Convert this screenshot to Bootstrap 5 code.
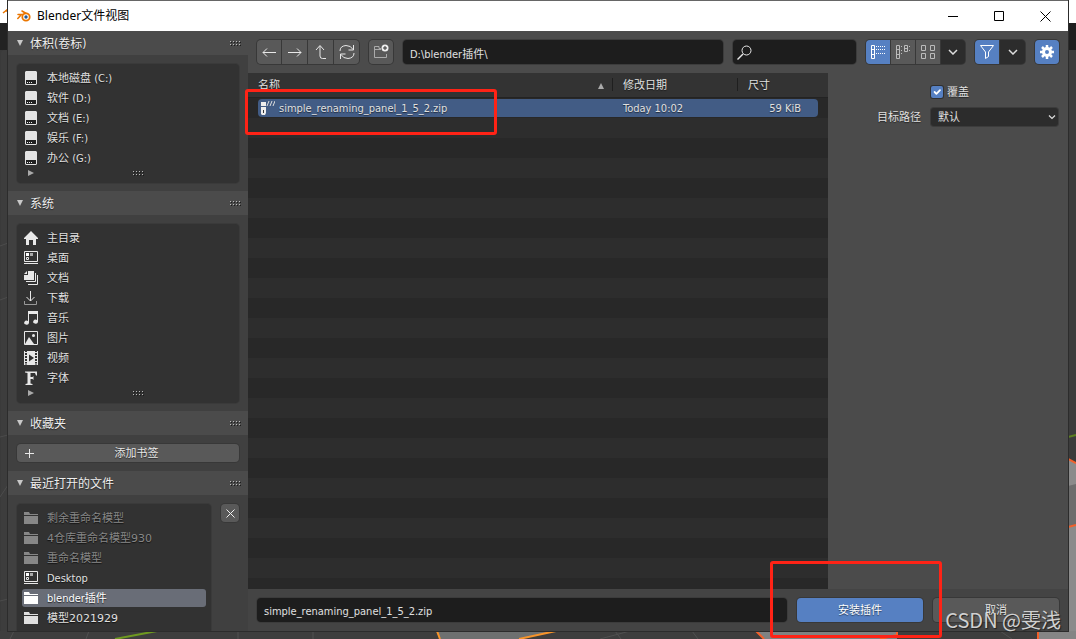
<!DOCTYPE html>
<html lang="zh-CN">
<head>
<meta charset="utf-8">
<meta name="viewport" content="width=device-width, initial-scale=1">
<title>Blender文件视图</title>
<link href="https://cdn.jsdelivr.net/npm/bootstrap@5.3.0/dist/css/bootstrap.min.css" rel="stylesheet">
<style>
:root{--ui:"DejaVu Sans Condensed","DejaVu Sans","Noto Sans CJK SC",sans-serif;--wide:"DejaVu Sans","Noto Sans CJK SC",sans-serif;--blue:#5680c2;--line:#383838}
body{font:11px/20px var(--ui);color:#e0e0e0;background:#3a3a3a;height:100vh;overflow:hidden}
svg{display:block;flex:none}
.scene{position:absolute;inset:0;overflow:hidden}
.scene .rightside{position:absolute;right:0;top:0}
.scene .leftside{position:absolute;left:0;top:0}
.scene .floor{position:absolute;left:0;bottom:0}
.desk{padding:0 8px 8px;position:relative}
.win{background:#4b4b4b;border-top:1px solid #666;box-shadow:0 0 0 1px #2c2c2c}
.titlebar{height:30px;background:#fff;color:#000;font:12px/30px "Noto Sans","Noto Sans CJK SC",sans-serif;padding-left:9px}
.titlebar .name{margin-left:6px}
.titlebar button{width:46px;height:30px;border:0;background:none;padding:0;display:flex;align-items:center;justify-content:center}
.side{width:240px;background:#404040;overflow:hidden}
.sec-head{height:24px;width:100%;border:0;background:#4b4b4b;color:#eee;font:12px/22px var(--ui);padding:2px 7px 0 9px;text-shadow:0 1px 1px #0008}
.sec-head svg,.pane a svg{margin-top:-2px}
.sec-head .tri{margin-right:7px}
.sec-body{padding:9px 9px 8px}
.sec-body.fav{padding-bottom:9px}
.pane{background:#323232;border-radius:4px;padding:4px 5px 5px;box-shadow:0 0 0 1px #3a3a3a}
.pane.recent{width:194px}
.pane a{display:flex;align-items:center;height:20px;color:#e0e0e0;text-decoration:none;padding:2px 0 0 2px;text-shadow:0 1px 1px #000a;border-radius:3px}
.pane a svg{margin-right:9px}
.pane a.off{color:#878787}
.pane a.on{background:#696d77;color:#fff;height:18px;margin:1px 0}
.num{font-family:var(--wide)}
.grip{height:10px;display:flex;align-items:center}
.ui-btn{background:#595959;color:#e6e6e6;border:0;border-radius:4px;padding:0;display:flex;align-items:center;justify-content:center;font:11px/18px var(--ui);box-shadow:0 0 0 1px var(--line);text-shadow:0 1px 1px #0008}
.ui-btn span{padding-top:2px}
.h18{height:18px}.h24{height:24px}
.sq18{width:18px}.sq{width:24px}.w25{width:25px}
.blue{background:var(--blue);color:#fff}
.dark{background:#2c2c2c}
.grp{display:flex;gap:1px;background:var(--line);border-radius:4px;box-shadow:0 0 0 1px var(--line);overflow:hidden}
.grp .ui-btn{border-radius:0;box-shadow:none}
.field{height:24px;background:#1d1d1d;border:0;border-radius:4px;box-shadow:0 0 0 1px #3c3c3c;color:#e0e0e0;font:11px/22px var(--ui);padding:2px 7px 0;outline:0;min-width:0}
.bar{padding:9px;gap:10px}
.find{width:123px;position:relative}
.find svg{position:absolute;left:4px;top:5px}
.find .field{width:100%;padding-left:24px}
.files{padding:0 10px;background:linear-gradient(#333 24px,#232323 24px,#232323 25px,transparent 25px),repeating-linear-gradient(#282828 0,#282828 20px,#2d2d2d 20px,#2d2d2d 40px) 0 25px}
.files table{width:100%;table-layout:fixed;border-collapse:separate;border-spacing:0;text-shadow:0 1px 1px #0008}
.files th{font-weight:400;height:26px;padding:0}
.files th+th{background:linear-gradient(#1f1f1f,#1f1f1f) 0 5px/1px 13px no-repeat;padding-left:11px}
.files td{height:18px;padding:2px 0 0;line-height:16px;background:#425c85}
.files td+td{padding-left:11px}
.files td svg{margin-top:-2px}
.files td:first-child{border-radius:4px 0 0 4px}
.files td:last-child{border-radius:0 4px 4px 0;text-align:right;padding-right:17px}
.opts{width:240px;flex:none;padding:8px 10px}
.opts .form-check-input{width:12px;height:12px;margin:0;border:0;border-radius:2px;box-shadow:0 0 0 1px #303030}
.opts .form-check-input:checked{background-color:var(--blue);background-size:12px}
.opts .first{margin-left:93px}
.opts label{text-shadow:0 1px 1px #0008;padding-top:2px;white-space:nowrap}
.opts .dest{margin-top:3px;gap:10px}
.opts .form-select{width:127px;height:18px;padding:1px 7px 0;background-color:#2c2c2c;border:0;border-radius:3px;box-shadow:0 0 0 1px #3c3c3c;color:#e0e0e0;font:11px/17px var(--ui);background-position:right 2px center;background-size:8px;background-image:url("data:image/svg+xml,%3Csvg xmlns='http://www.w3.org/2000/svg' viewBox='0 0 8 8'%3E%3Cpath d='M1 2.5l3 3 3-3' fill='none' stroke='%23ddd' stroke-width='1.2'/%3E%3C/svg%3E")}
.foot{background:#444;padding:9px;gap:10px}
.foot .ui-btn{width:126px}
.frame{position:absolute;border:3px solid #ff2316;border-radius:3px;pointer-events:none}
.frame.pick{left:-4px;top:16px;width:252px;height:46px}
.frame.go{right:126px;bottom:-7px;width:172px;height:77px}
.stamp{position:absolute;right:7px;bottom:-1px;font:20px/24px "Noto Sans CJK SC",sans-serif;color:#d0d0d0;text-shadow:1px 1px 1px #222;white-space:nowrap}
</style>
</head>
<body>
<svg width="0" height="0" class="position-absolute" aria-hidden="true">
<defs>
<symbol id="disk" viewBox="0 0 14 14"><path d="M2 0h10l1 1v12l-1 1H2l-1-1V1z" fill="#e4e4e4"/><path d="M2 9h10v4H2z" fill="#222"/><path d="M3 11h1v1H3zM5 11h1v1H5zM7 11h1v1H7z" fill="#eee"/></symbol>
<symbol id="folder" viewBox="0 0 14 14"><path d="M0 1h5l1 2h8v1H0zM0 5h14v8H0z" fill="currentColor"/></symbol>
<symbol id="desktop" viewBox="0 0 14 14"><path d="M.5 .5v10h13V.5zM0 12.500h14" fill="none" stroke="#e8e8e8"/><path d="M2 2h3v3H2z" fill="#fff"/><path d="M6 2h3v3H6z" fill="#aaa"/><path d="M2.500 6.500h2v2h-2z" fill="none" stroke="#e8e8e8"/></symbol>
<symbol id="down" viewBox="0 0 6 6"><path d="M0 0h6L3 6z" fill="#c8c8c8"/></symbol>
<symbol id="right" viewBox="0 0 6 6"><path d="M0 0v6l6-3z" fill="#aaa"/></symbol>
<symbol id="dots" viewBox="0 0 11 5"><path d="M0 0h1v1H0zM3 0h1v1H3zM6 0h1v1H6zM9 0h1v1H9zM0 3h1v1H0zM3 3h1v1H3zM6 3h1v1H6zM9 3h1v1H9z" fill="#bbb"/><path d="M1 1h1v1H1zM4 1h1v1H4zM7 1h1v1H7zM10 1h1v1h-1zM1 4h1v1H1zM4 4h1v1H4zM7 4h1v1H7zM10 4h1v1h-1z" fill="#1c1c1c"/></symbol>
<symbol id="chev" viewBox="0 0 10 6"><path d="M1 1l4 4 4-4" fill="none" stroke="#ddd" stroke-width="1.500"/></symbol>
<symbol id="logo" viewBox="0 0 14 12"><path d="M1 4.500h6M5 1l5 3M4 5L.8 8.500" fill="none" stroke="#ea7600" stroke-width="1.500" stroke-linecap="round"/><circle cx="9" cy="7" r="3.700" fill="#fff" stroke="#ea7600" stroke-width="1.800"/><circle cx="9" cy="7" r="1.700" fill="#205a96"/></symbol>
</defs>
</svg>

<div class="scene" aria-hidden="true">
<svg class="leftside" width="8" height="639"><path d="M0 0h8v23H0z" fill="#fff"/><path d="M0 23h8v27H0z" fill="#222"/><path d="M3 13l5-4M5 11h3" stroke="#ea7600" stroke-width="1.500"/><path d="M1 639V53q0-3 4-3h3v589z" fill="#3d3d3d"/><path d="M0 246l8-3M0 300l8-3M0 437l8-2M0 497l8-12M0 601l8-2" stroke="#4c4c4c"/></svg>
<svg class="rightside" width="8" height="639"><path d="M0 0h8v23H0z" fill="#fff"/><path d="M0 23h8v27H0z" fill="#1f1f1f"/><path d="M0 50h8v589H0z" fill="#3c3c3c"/><path d="M0 459l8 4v176H0z" fill="#8b8b8b"/><path d="M0 486l8-2v42H0z" fill="#6d6d6d"/><path d="M0 437l8-2" stroke="#5d8020" stroke-width="2"/><path d="M0 459l8 4M0 527l8-2" stroke="#f4602a" stroke-width="2"/></svg>
<svg class="floor" width="1076" height="8"><path d="M0 0h1076v8H0z" fill="#3e3e3e"/><path d="M436 0h120l-38 8h-78z" fill="#6e7070"/><path d="M756 0h141v8H764z" fill="#808282"/><path d="M1038 0h38v8h-38z" fill="#858585"/><path d="M115 8l42-8" stroke="#6f9a20" stroke-width="2"/><path d="M437 0l3 8M519 8l37-8" stroke="#f7942a" stroke-width="2"/><path d="M756 0l8 8M897 0v4l-17 4M1038 0v8" fill="none" stroke="#f4602a" stroke-width="2"/><path d="M14 0l-4 8M89 0l-3 8M238 0v8M313 0v8M600 8l30-8M615 0l6 8M692 0l6 8M1000 0l12 8" stroke="#505050"/></svg>
</div>

<div class="desk vh-100 d-flex">
<div class="win flex-fill d-flex flex-column position-relative">
<header class="titlebar d-flex align-items-center">
<svg width="14" height="12"><use href="#logo"/></svg><span class="name me-auto">Blender文件视图</span>
<button aria-label="最小化"><svg width="11" height="11"><path d="M0 5.500h10" stroke="#000"/></svg></button>
<button aria-label="最大化"><svg width="10" height="10"><path d="M.5.5h9v9h-9z" fill="none" stroke="#000"/></svg></button>
<button aria-label="关闭"><svg width="11" height="11"><path d="M.5.5l10 10M10.500.5l-10 10" stroke="#000"/></svg></button>
</header>
<div class="d-flex flex-fill overflow-hidden">
<nav class="side flex-shrink-0">
<button class="sec-head d-flex align-items-center"><svg class="tri" width="6" height="6"><use href="#down"/></svg>体积(卷标)<svg class="ms-auto" width="11" height="5"><use href="#dots"/></svg></button>
<div class="sec-body"><div class="pane">
<a href="#"><svg width="14" height="14"><use href="#disk"/></svg>本地磁盘 (C:)</a>
<a href="#"><svg width="14" height="14"><use href="#disk"/></svg>软件 (D:)</a>
<a href="#"><svg width="14" height="14"><use href="#disk"/></svg>文档 (E:)</a>
<a href="#"><svg width="14" height="14"><use href="#disk"/></svg>娱乐 (F:)</a>
<a href="#"><svg width="14" height="14"><use href="#disk"/></svg>办公 (G:)</a>
<div class="grip"><svg class="ms-1 me-2" width="8" height="6"><use href="#right" width="6" height="6" x="2"/></svg><svg class="mx-auto" width="11" height="5"><use href="#dots"/></svg></div>
</div></div>
<button class="sec-head d-flex align-items-center"><svg class="tri" width="6" height="6"><use href="#down"/></svg>系统<svg class="ms-auto" width="11" height="5"><use href="#dots"/></svg></button>
<div class="sec-body"><div class="pane">
<a href="#"><svg width="14" height="14"><path d="M7 0l7 7v1h-2v6H9V9H5v5H2V8H0V7z" fill="#e8e8e8"/></svg>主目录</a>
<a href="#"><svg width="14" height="14"><use href="#desktop"/></svg>桌面</a>
<a href="#"><svg width="14" height="14"><path d="M4 0h6v9H0V4h4z" fill="#e8e8e8"/><path d="M0 3l3-3v3z" fill="#e8e8e8"/><path d="M11.500 2v8.500H2M13.500 4v9.500H4" fill="none" stroke="#e8e8e8"/></svg>文档</a>
<a href="#"><svg width="14" height="14"><path d="M6.500 0v10M2.500 6l4 4 4-4" fill="none" stroke="#e8e8e8"/><path d="M.5 10v3.500h12V10" fill="none" stroke="#999"/></svg>下载</a>
<a href="#"><svg width="14" height="14"><path d="M4 0h10v11a2.400 2 0 1 1-1-2V3H5v9a2.400 2 0 1 1-1-2z" fill="#e8e8e8"/></svg>音乐</a>
<a href="#"><svg width="14" height="14"><path d="M.5.5h13v13H.5z" fill="none" stroke="#e8e8e8"/><path d="M1 13l4-7 5 7z" fill="#e8e8e8"/><circle cx="9.500" cy="4.500" r="1.500" fill="#e8e8e8"/></svg>图片</a>
<a href="#"><svg width="14" height="14"><path d="M3 0h8v14H3z" fill="#e8e8e8"/><path d="M.5 0v14M13.500 0v14M0 1.500h3M0 4.500h3M0 7.500h3M0 10.500h3M0 13h3M11 1.500h3M11 4.500h3M11 7.500h3M11 10.500h3M11 13h3" stroke="#e8e8e8"/><path d="M5 3.500v7L10 7z" fill="#303030"/></svg>视频</a>
<a href="#"><svg width="14" height="14"><path d="M1 .5h12v4h-1l-1-2.500H6.500V6h2L9.500 5v4L8.500 8h-2v4.500L8.500 13v1h-7v-1l2-.5V2l-2.500-.5z" fill="#e8e8e8"/></svg>字体</a>
<div class="grip"><svg class="ms-1 me-2" width="8" height="6"><use href="#right" width="6" height="6" x="2"/></svg><svg class="mx-auto" width="11" height="5"><use href="#dots"/></svg></div>
</div></div>
<button class="sec-head d-flex align-items-center"><svg class="tri" width="6" height="6"><use href="#down"/></svg>收藏夹<svg class="ms-auto" width="11" height="5"><use href="#dots"/></svg></button>
<div class="sec-body fav"><button class="ui-btn h18 w-100 ps-2"><svg width="9" height="9"><path d="M4.500 0v9M0 4.500h9" stroke="#e8e8e8"/></svg><span class="flex-fill">添加书签</span></button></div>
<button class="sec-head d-flex align-items-center"><svg class="tri" width="6" height="6"><use href="#down"/></svg>最近打开的文件<svg class="ms-auto" width="11" height="5"><use href="#dots"/></svg></button>
<div class="sec-body d-flex justify-content-between align-items-start"><div class="pane recent">
<a href="#" class="off"><svg width="14" height="14"><use href="#folder"/></svg>剩余重命名模型</a>
<a href="#" class="off num"><svg width="14" height="14"><use href="#folder"/></svg>4仓库重命名模型930</a>
<a href="#" class="off"><svg width="14" height="14"><use href="#folder"/></svg>重命名模型</a>
<a href="#"><svg width="14" height="14"><use href="#desktop"/></svg>Desktop</a>
<a href="#" class="on"><svg width="14" height="14"><use href="#folder"/></svg>blender插件</a>
<a href="#" class="num"><svg width="14" height="14"><use href="#folder"/></svg>模型2021929</a>
</div><button class="ui-btn h18 sq18" aria-label="清除"><svg width="9" height="9"><path d="M.5.5l8 8M8.500.5l-8 8" stroke="#eee"/></svg></button></div>
</nav>

<main class="flex-fill d-flex flex-column overflow-hidden">
<div class="bar d-flex">
<div class="grp">
<button class="ui-btn sq h24" aria-label="后退"><svg width="14" height="14"><path d="M14 7.500H1M5 3.500l-4 4 4 4" fill="none" stroke="#e8e8e8"/></svg></button>
<button class="ui-btn h24 w25" aria-label="前进"><svg width="14" height="14"><path d="M0 7.500h13M9 3.500l4 4-4 4" fill="none" stroke="#e8e8e8"/></svg></button>
<button class="ui-btn h24 w25" aria-label="上级"><svg width="14" height="14"><path d="M2 5l4-4.500L10 5M6 1v10q0 2.500 2.500 2.500H12" fill="none" stroke="#e8e8e8"/></svg></button>
<button class="ui-btn h24 w25" aria-label="刷新"><svg width="16" height="16"><path d="M1 7q0-5 6-5.500 5 0 7 4M14.500 1v5h-5M15 9q0 5-6 5.500-5 0-7-4M1.500 15v-5h5" fill="none" stroke="#e8e8e8"/></svg></button>
</div>
<button class="ui-btn sq h24" aria-label="新建文件夹"><svg width="16" height="16"><path d="M8 4.500H6V2.500H1.500v11h12V10M1 5.500h7" fill="none" stroke="#aaa"/><circle cx="12" cy="4" r="3.500" fill="#eee"/><path d="M12 2v4M10 4h4" stroke="#333"/></svg></button>
<input class="field flex-fill" aria-label="路径" value="D:\blender插件\">
<div class="find"><input class="field" aria-label="搜索" type="text"><svg width="16" height="16"><circle cx="9.500" cy="5.500" r="4.500" fill="none" stroke="#e8e8e8"/><path d="M6 9l-5.500 5.500" stroke="#e8e8e8" stroke-width="1.500"/></svg></div>
<div class="grp">
<button class="ui-btn sq h24 blue" aria-label="垂直列表"><svg width="16" height="14"><path d="M1.500.5h3v13h-3zM1 4.500h4M1 9.500h4" fill="none" stroke="#fff"/><path d="M6 1.500h10M6 4.500h10M6 8.500h10" stroke="#fff" stroke-dasharray="1 1"/></svg></button>
<button class="ui-btn sq h24" aria-label="水平列表"><svg width="16" height="14"><path d="M1.500.5h3v13h-3zM1 4.500h4M1 9.500h4M9.500.5h3v6h-3zM9 3.500h4" fill="none" stroke="#bbb"/><path d="M6 1.500h1M6 5.500h1M6 8.500h1M14 1.500h1M14 5.500h1" stroke="#bbb"/></svg></button>
<button class="ui-btn sq h24" aria-label="缩略图"><svg width="14" height="14"><path d="M.5.5h4v5h-4zM9.500.5h4v5h-4zM.5 8.500h4v5h-4zM9.500 8.500h4v5h-4z" fill="none" stroke="#bbb"/></svg></button>
<button class="ui-btn sq h24 dark" aria-label="显示设置"><svg width="10" height="6"><use href="#chev"/></svg></button>
</div>
<div class="grp"><button class="ui-btn sq h24 blue" aria-label="过滤"><svg width="14" height="14"><path d="M.5.5h13L8.500 7v4.500l-3 2V7z" fill="none" stroke="#fff"/></svg></button><button class="ui-btn h24 w25 dark" aria-label="过滤设置"><svg width="10" height="6"><use href="#chev"/></svg></button></div>
<button class="ui-btn sq h24 blue" aria-label="选项"><svg width="14" height="14"><circle cx="7" cy="7" r="3.500" fill="none" stroke="#fff" stroke-width="3"/><path d="M7 0v3M7 11v3M0 7h3M11 7h3M2 2l2.300 2.300M9.700 9.700L12 12M12 2L9.700 4.300M2 12l2.300-2.300" stroke="#fff" stroke-width="2.500"/></svg></button>
</div>
<div class="d-flex flex-fill">
<div class="files flex-fill">
<table><colgroup><col><col style="width:125px"><col style="width:81px"></colgroup>
<thead><tr><th><div class="d-flex align-items-center justify-content-between pe-2">名称<svg width="6" height="6"><path d="M0 6h6L3 0z" fill="#aaa"/></svg></div></th><th>修改日期</th><th>尺寸</th></tr></thead>
<tbody><tr><td><div class="d-flex align-items-center gap-1"><svg width="17" height="14"><path d="M3 1h5v4H3z" fill="#eee"/><path d="M3 6h5v6l-1 2H4l-1-1z" fill="#eee"/><path d="M5 9h1v3H5z" fill="#333"/><path d="M9 5l2-5M12 5l2-5M15 5l2-5" stroke="#ddd"/></svg>simple_renaming_panel_1_5_2.zip</div></td><td>Today 10:02</td><td>59 KiB</td></tr></tbody></table>
</div>
<div class="opts">
<div class="first d-flex align-items-center gap-1"><input class="form-check-input" type="checkbox" id="ow" checked><label for="ow">覆盖</label></div>
<div class="dest d-flex align-items-center justify-content-end"><label for="dest">目标路径</label><select class="form-select" id="dest"><option>默认</option></select></div>
</div>
</div>
<div class="foot d-flex">
<input class="field flex-fill" aria-label="文件名" value="simple_renaming_panel_1_5_2.zip">
<button class="ui-btn h24 blue"><span>安装插件</span></button>
<button class="ui-btn h24"><span>取消</span></button>
</div>
</main>
</div>
<div class="frame pick" style="left:237px;top:88px"></div>
<div class="frame go"></div>
<div class="stamp">CSDN @雯浅</div>
</div>
</div>
<script src="https://cdn.jsdelivr.net/npm/bootstrap@5.3.0/dist/js/bootstrap.bundle.min.js"></script>
</body>
</html>
